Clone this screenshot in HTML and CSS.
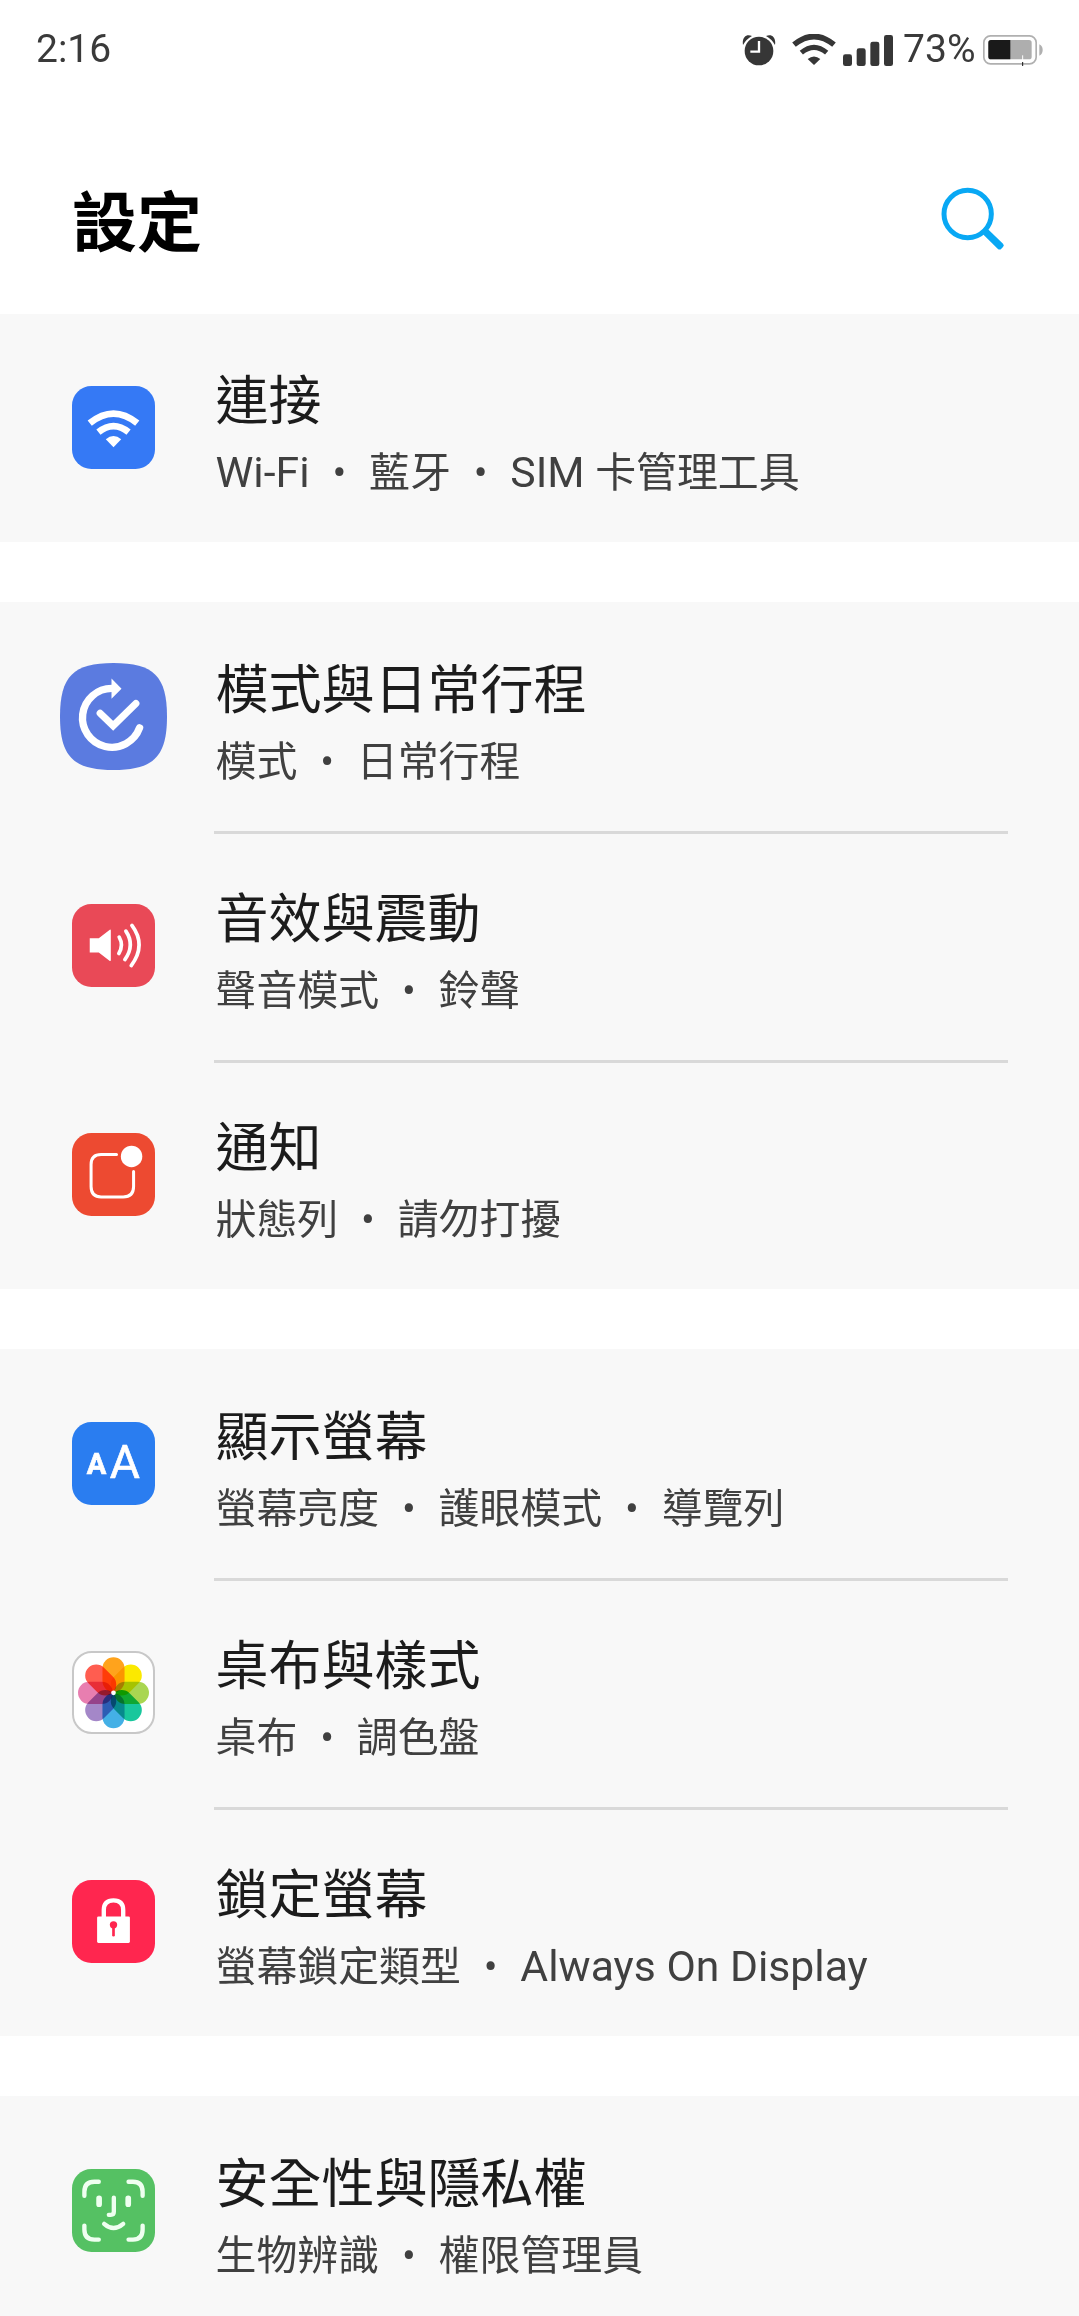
FILE: index.html
```
<!DOCTYPE html>
<html lang="zh-Hant">
<head>
    <meta charset="UTF-8">
    <meta name="viewport" content="width=device-width, initial-scale=1.0">
    <title>設定</title>
    <link rel="stylesheet" href="styles.css">
</head>
<body>
    <div class="statusbar">
        <span class="time">2:16</span>
        <div class="status-icons">
            <svg class="alarm" width="34" height="34" viewBox="0 0 102 102">
                <circle cx="51" cy="54" r="43" fill="#363636"/>
                <path d="M3 36 C-1 12 14 1 30 9 Q13 18 3 36 Z M99 36 C103 12 88 1 72 9 Q89 18 99 36 Z" fill="#363636"/>
                <path d="M51 24 V56 H25" fill="none" stroke="#fff" stroke-width="7"/>
            </svg>
            <svg class="wifi" width="44" height="32" viewBox="0 0 132 96">
                <path d="M6 32 Q66 -17 126 32" fill="none" stroke="#363636" stroke-width="17"/>
                <path d="M28 56 Q66 24 104 56" fill="none" stroke="#363636" stroke-width="15"/>
                <path d="M47 75 Q66 60 85 75 L66 93 Z" fill="#363636"/>
            </svg>
            <svg class="signal" width="50" height="31" viewBox="0 0 150 93" fill="#363636">
                <rect x="0" y="58" width="27" height="35" rx="7"/>
                <rect x="41" y="40" width="27" height="53" rx="7"/>
                <rect x="82" y="20" width="27" height="73" rx="7"/>
                <rect x="123" y="0" width="27" height="93" rx="7"/>
            </svg>
            <span class="percent">73%</span>
            <svg class="battery" width="60" height="32" viewBox="0 0 180 96">
                <rect x="2.500" y="5.500" width="157" height="84" rx="20" fill="none" stroke="#b0b0b0" stroke-width="5"/>
                <rect x="16" y="18" width="130" height="58" rx="8" fill="#aeaeae"/>
                <path d="M24 18 H82 V76 H24 Q16 76 16 68 V26 Q16 18 24 18 Z" fill="#1a1a1a"/>
                <path d="M169 31 Q179 36 179 48 Q179 60 169 65 Z" fill="#b0b0b0"/>
                <path d="M119 64 V84" stroke="#fff" stroke-width="3"/>
                <path d="M119 84 V96" stroke="#111" stroke-width="3"/>
            </svg>
        </div>
    </div>

    <div class="header">
        <h1>設定</h1>
        <svg class="search" width="64" height="64" viewBox="0 0 192 192">
            <path d="M123 139 L138 124 L186 170 Q191 175 186 180 L181 185 Q176 190 170 185 Z" fill="#09a8f4"/>
            <circle cx="80" cy="81" r="71" fill="none" stroke="#09a8f4" stroke-width="15"/>
        </svg>
    </div>

    <div class="group first">
        <div class="item">
            <svg class="icon" viewBox="0 0 248 248">
                <rect width="248" height="248" rx="58" fill="#3579f5"/>
                <path d="M53 111 Q124 54 195 111" fill="none" stroke="#fff" stroke-width="20"/>
                <path d="M79 138 Q124 102 169 138" fill="none" stroke="#fff" stroke-width="20"/>
                <path d="M101 159 Q124 140 147 159 L124 183 Z" fill="#fff"/>
            </svg>
            <div class="text">
                <div class="title">連接</div>
                <div class="sub"><span class="latin">Wi-Fi</span><span class="dot">•</span>藍牙<span class="dot">•</span><span class="latin">SIM </span>卡管理工具</div>
            </div>
        </div>
    </div>

    <div class="group">
        <div class="item">
            <svg class="icon large" viewBox="0 0 320 320">
                <path d="M160 0 C280 0 320 40 320 160 C320 280 280 320 160 320 C40 320 0 280 0 160 C0 40 40 0 160 0 Z" fill="#5b7be0"/>
                <path d="M156 76 A88 88 0 1 0 238 194" fill="none" stroke="#fff" stroke-width="22" stroke-linecap="round"/>
                <path d="M154 46 L184 77 L154 107 Z" fill="#fff"/>
                <path d="M120 150 L159 188 L227 121" fill="none" stroke="#fff" stroke-width="21" stroke-linecap="round"/>
            </svg>
            <div class="text">
                <div class="title">模式與日常行程</div>
                <div class="sub">模式<span class="dot">•</span>日常行程</div>
            </div>
        </div>
        <div class="item">
            <svg class="icon" viewBox="0 0 248 248">
                <rect width="248" height="248" rx="58" fill="#e94957"/>
                <path d="M53 102 H80 L114 76 Q116 76 116 79 V168 Q116 171 113 170 L80 145 H53 Z" fill="#fff"/>
                <g fill="none" stroke="#fff" stroke-width="11" stroke-linecap="round">
                    <path d="M141 99 Q155 123 140 148"/>
                    <path d="M161 81 Q189 123 158 166"/>
                    <path d="M179 64 Q223 123 177 184"/>
                </g>
            </svg>
            <div class="text">
                <div class="title">音效與震動</div>
                <div class="sub">聲音模式<span class="dot">•</span>鈴聲</div>
            </div>
        </div>
        <div class="item">
            <svg class="icon" viewBox="0 0 248 248">
                <rect width="248" height="248" rx="58" fill="#ed4a31"/>
                <path d="M133 64 H87 Q57 64 57 94 V160 Q57 191 87 191 H153 Q184 191 184 160 V115" fill="none" stroke="#fff" stroke-width="9" stroke-linecap="round"/>
                <circle cx="178" cy="70" r="32" fill="#fff"/>
            </svg>
            <div class="text">
                <div class="title">通知</div>
                <div class="sub">狀態列<span class="dot">•</span>請勿打擾</div>
            </div>
        </div>
    </div>

    <div class="group">
        <div class="item">
            <svg class="icon" viewBox="0 0 248 248">
                <rect width="248" height="248" rx="58" fill="#2a7df0"/>
                <text class="letter small" x="73" y="155">A</text>
                <text class="letter" x="158" y="168">A</text>
            </svg>
            <div class="text">
                <div class="title">顯示螢幕</div>
                <div class="sub">螢幕亮度<span class="dot">•</span>護眼模式<span class="dot">•</span>導覽列</div>
            </div>
        </div>
        <div class="item">
            <svg class="icon" viewBox="0 0 248 248">
                <rect x="3" y="3" width="242" height="242" rx="56" fill="#fff" stroke="#c8c8c8" stroke-width="6"/>
                <g class="petals" transform="translate(124 125)">
                    <rect x="-33" y="-106" width="66" height="104" rx="33" fill="#ffa31c"/>
                    <rect x="-33" y="-106" width="66" height="104" rx="33" fill="#fbe900" transform="rotate(45)"/>
                    <rect x="-33" y="-106" width="66" height="104" rx="33" fill="#a9d651" transform="rotate(90)"/>
                    <rect x="-33" y="-106" width="66" height="104" rx="33" fill="#18c79c" transform="rotate(135)"/>
                    <rect x="-33" y="-106" width="66" height="104" rx="33" fill="#44b0e6" transform="rotate(180)"/>
                    <rect x="-33" y="-106" width="66" height="104" rx="33" fill="#a487c8" transform="rotate(225)"/>
                    <rect x="-33" y="-106" width="66" height="104" rx="33" fill="#e87eb0" transform="rotate(270)"/>
                    <rect x="-33" y="-106" width="66" height="104" rx="33" fill="#ff5d50" transform="rotate(315)"/>
                </g>
                <circle cx="124" cy="125" r="7" fill="#fff"/>
            </svg>
            <div class="text">
                <div class="title">桌布與樣式</div>
                <div class="sub">桌布<span class="dot">•</span>調色盤</div>
            </div>
        </div>
        <div class="item">
            <svg class="icon" viewBox="0 0 248 248">
                <rect width="248" height="248" rx="58" fill="#ff264f"/>
                <path d="M95 112 V90 Q95 61 124 61 Q153 61 153 90 V112" fill="none" stroke="#fff" stroke-width="13"/>
                <rect x="75" y="109" width="98" height="79" rx="4" fill="#fff"/>
                <circle cx="124" cy="134" r="11" fill="#ff264f"/>
                <path d="M124 138 V165" stroke="#ff264f" stroke-width="8" stroke-linecap="round"/>
            </svg>
            <div class="text">
                <div class="title">鎖定螢幕</div>
                <div class="sub">螢幕鎖定類型<span class="dot">•</span><span class="latin">Always On Display</span></div>
            </div>
        </div>
    </div>

    <div class="group">
        <div class="item">
            <svg class="icon" viewBox="0 0 248 248">
                <rect width="248" height="248" rx="58" fill="#55c163"/>
                <g fill="none" stroke="#effff0" stroke-width="13" stroke-linecap="round">
                    <path d="M37 80 V68 Q37 38 67 38 H80"/>
                    <path d="M169 38 H182 Q211 38 211 68 V80"/>
                    <path d="M37 169 V181 Q37 211 67 211 H80"/>
                    <path d="M169 211 H182 Q211 211 211 181 V169"/>
                    <path d="M125 86 V128 Q125 137 116 137 H110"/>
                    <path d="M96 164 Q124 189 153 164"/>
                </g>
                <path d="M81 88 V105 M168 88 V105" stroke="#effff0" stroke-width="17" stroke-linecap="round"/>
            </svg>
            <div class="text">
                <div class="title">安全性與隱私權</div>
                <div class="sub">生物辨識<span class="dot">•</span>權限管理員</div>
            </div>
        </div>
    </div>
</body>
</html>
```
FILE: styles.css
```
body {
    margin: 0;
    height: 2316px;
    overflow: hidden;
    background: #fff;
    font-family: Roboto, "Noto Sans CJK TC", sans-serif;
}
.statusbar {
    display: flex;
    justify-content: space-between;
    align-items: center;
    height: 97px;
    padding: 0 36px 0 36px;
    color: #3a3a3a;
    font-size: 39px;
}
.status-icons {
    display: flex;
    align-items: center;
}
.status-icons svg {
    margin-top: 3px;
}
.wifi {
    margin-left: 15.5px;
}
.signal {
    margin-left: 7px;
}
.percent {
    margin-left: 10.5px;
}
.battery {
    margin-left: 7.5px;
}
.header {
    display: flex;
    justify-content: space-between;
    align-items: center;
    box-sizing: border-box;
    height: 217px;
    padding: 27px 74px 0 72px;
}
h1 {
    margin: 0;
    padding-top: 10px;
    font-size: 65px;
    line-height: 90px;
    font-weight: 700;
    color: #000;
}
.group {
    margin-bottom: 60px;
    background: #f8f8f8;
}
.item {
    display: flex;
    align-items: center;
    height: 229px;
    padding: 0 71px 0 72px;
}
.first .item {
    height: 227px;
    padding-bottom: 1px;
}
.icon {
    flex: none;
    width: 83px;
    height: 83px;
    margin-right: 59px;
}
.icon.large {
    width: 107px;
    height: 107px;
    margin-left: -12px;
    margin-right: 47px;
}
.text {
    flex: 1;
    box-sizing: border-box;
    height: 229px;
    padding: 53px 0 0 1.5px;
}
.item + .item .text {
    border-top: 3px solid #d9d9d9;
    padding-top: 50px;
}
.title {
    font-size: 53px;
    line-height: 72px;
    color: #1c1c1c;
}
.sub {
    height: 70px;
    font-size: 40.9px;
    line-height: 70px;
    color: #404040;
    white-space: nowrap;
}
.latin {
    font-size: 42.7px;
    line-height: 1;
    white-space: pre;
}
.dot {
    display: inline-block;
    width: 59.5px;
    text-align: center;
}
.letter {
    fill: #fff;
    stroke: #fff;
    stroke-width: 2;
    font-family: Roboto, sans-serif;
    font-size: 138px;
    font-weight: 400;
    text-anchor: middle;
}
.letter.small {
    font-size: 87px;
    font-weight: 700;
}
.petals {
    isolation: isolate;
}
.petals rect {
    mix-blend-mode: multiply;
}
```
